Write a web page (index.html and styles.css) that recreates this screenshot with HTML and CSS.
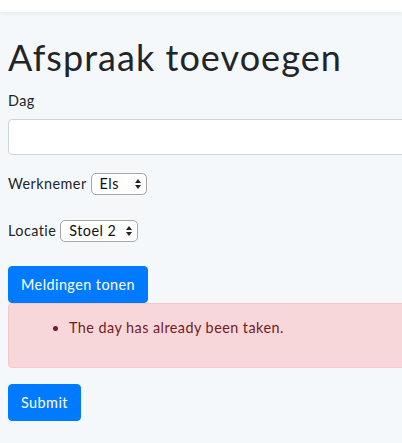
FILE: index.html
```html
<!DOCTYPE html>
<html lang="nl">
<head>
<meta charset="utf-8">
<title>Afspraak toevoegen</title>
<link rel="stylesheet" href="styles.css">
</head>
<body>
<nav class="navbar"></nav>
<main class="page">
  <h1 class="title">Afspraak toevoegen</h1>
  <form class="form">
    <div class="field">
      <label class="label" for="dag">Dag</label>
      <input class="input" id="dag" type="text">
    </div>
    <div class="inline-field employee-row">
      <label class="inline-label" for="werknemer">Werknemer</label>
      <span class="select-wrap">
        <select class="select select-employee" id="werknemer"><option>Els</option></select>
        <svg class="select-arrows" width="6" height="10" viewBox="0 0 6 10"><polygon points="0,4 3,0 6,4" fill="#222"/><polygon points="0,6 3,10 6,6" fill="#222"/></svg>
      </span>
    </div>
    <div class="inline-field location-row">
      <label class="inline-label" for="locatie">Locatie</label>
      <span class="select-wrap">
        <select class="select select-location" id="locatie"><option>Stoel 2</option></select>
        <svg class="select-arrows" width="6" height="10" viewBox="0 0 6 10"><polygon points="0,4 3,0 6,4" fill="#222"/><polygon points="0,6 3,10 6,6" fill="#222"/></svg>
      </span>
    </div>
    <button class="btn btn-toggle" type="button">Meldingen tonen</button>
    <div class="alert">
      <ul class="alert-list">
        <li>The day has already been taken.</li>
      </ul>
    </div>
    <button class="btn" type="submit">Submit</button>
  </form>
</main>
</body>
</html>
```

FILE: styles.css
```css
html, body {
  margin: 0;
  padding: 0;
  overflow: hidden;
}
body {
  background: #f5f8fa;
  font-family: "Lato", "Open Sans", sans-serif;
  font-size: 14.4px;
  line-height: 1.6;
  letter-spacing: 0.45px;
  color: #212529;
  width: 402px;
  height: 443px;
}
.navbar {
  height: 12px;
  background: #fff;
  box-shadow: 0 2px 4px rgba(0, 0, 0, 0.05);
}
.page {
  width: 700px;
  padding: 0 8px;
}
.title {
  margin: 24px 0 9.5px;
  font-size: 36px;
  font-weight: 400;
  letter-spacing: 1.05px;
  line-height: 1.2;
  color: #212529;
}
.form {
  display: flex;
  flex-direction: column;
  align-items: flex-start;
}
.field {
  display: flex;
  flex-direction: column;
  align-items: flex-start;
  align-self: stretch;
}
.label {
  margin-bottom: 7px;
}
.input {
  box-sizing: border-box;
  width: 100%;
  height: 36px;
  margin: 0;
  border: 1px solid #ced4da;
  border-radius: 4px;
  background: #fff;
  font: inherit;
}
.inline-field {
  display: flex;
  align-items: center;
  gap: 4px;
  height: 22px;
}
.employee-row {
  margin-top: 18px;
}
.location-row {
  margin-top: 25px;
}
.select-wrap {
  position: relative;
  display: inline-flex;
}
.select {
  -webkit-appearance: none;
  appearance: none;
  box-sizing: border-box;
  height: 22px;
  margin: 0;
  padding: 0 0 0 8px;
  border: 1px solid #a8a8a8;
  border-radius: 5px;
  background: #fff;
  font-family: inherit;
  font-size: 14.4px;
  letter-spacing: 0.45px;
  color: #111;
}
.select-employee {
  width: 56px;
}
.select-location {
  width: 78px;
}
.select-arrows {
  position: absolute;
  right: 6px;
  top: 6px;
  pointer-events: none;
}
.btn {
  box-sizing: border-box;
  height: 37px;
  padding: 6px 12px;
  border: 1px solid #007bff;
  border-radius: 4px;
  background: #007bff;
  color: #fff;
  font-family: inherit;
  font-size: 14.4px;
  letter-spacing: 0.45px;
  line-height: 1.6;
}
.btn-toggle {
  margin-top: 24px;
}
.alert {
  box-sizing: border-box;
  align-self: stretch;
  margin-bottom: 16px;
  padding: 12px 20px;
  border: 1px solid #f5c6cb;
  border-radius: 4px;
  background: #f8d7da;
  color: #721c24;
}
.alert-list {
  margin: 0 0 16px;
  padding-left: 40px;
}
```
